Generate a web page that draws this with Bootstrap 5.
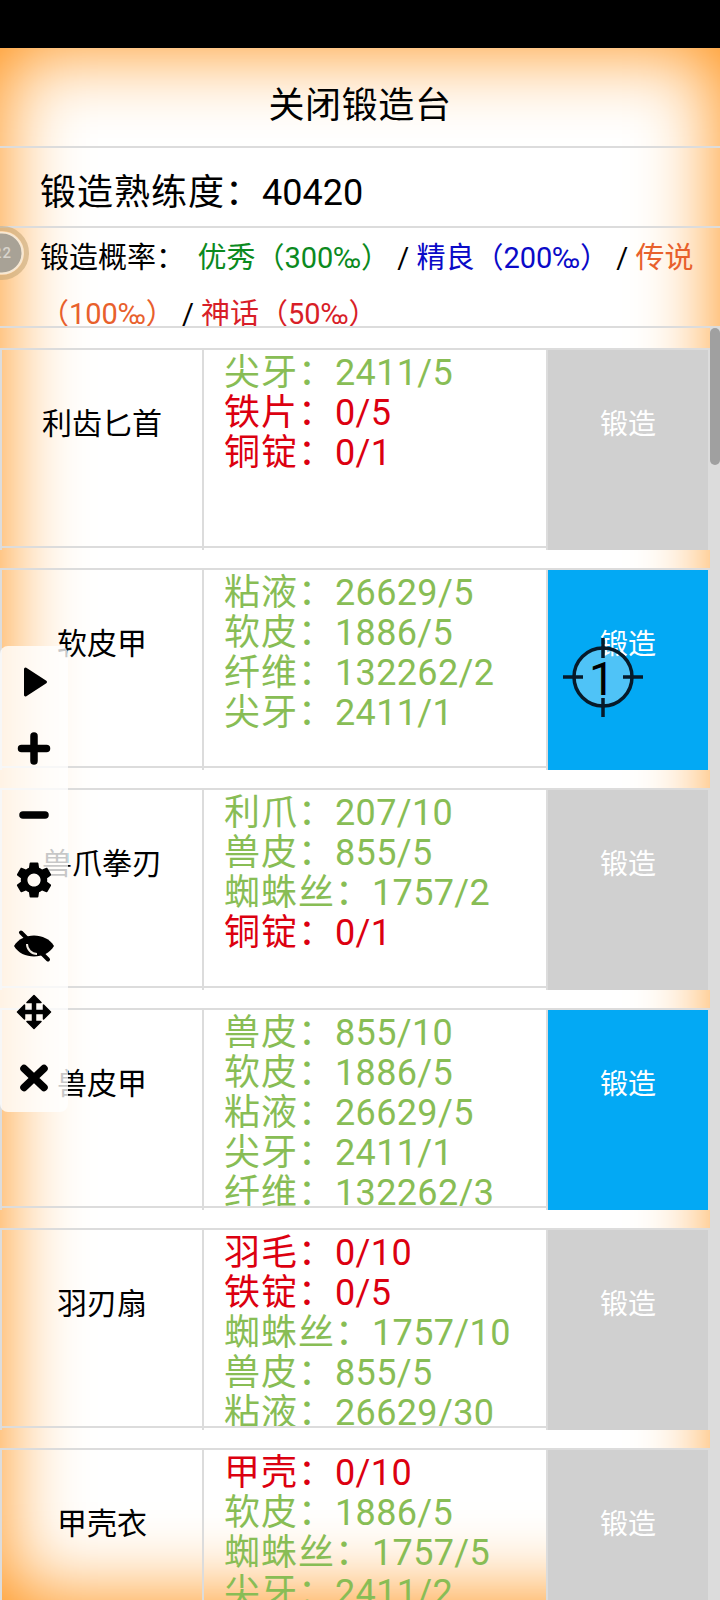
<!DOCTYPE html>
<html lang="zh">
<head>
<meta charset="utf-8">
<title>锻造台</title>
<link rel="stylesheet" href="https://cdn.jsdelivr.net/npm/bootstrap@5.3.0/dist/css/bootstrap.min.css">
<style>
html,body{margin:0;background:#fff;}
body{font-family:Roboto,"Noto Sans CJK SC",sans-serif;color:#000;}
.screen{width:720px;height:1600px;overflow:hidden;position:relative;}
.statusbar{height:48px;background:#000;flex:none;}
.stage{height:1552px;flex:none;box-shadow:inset 0 0 82px #ff8c0a;background:#fff;}
.title-bar{height:100px;flex:none;padding-top:16px;line-height:84px;font-size:36px;letter-spacing:.6px;border-bottom:2px solid #dcdcdc;}
.skill-bar{height:80px;flex:none;padding:12px 0 0 40px;line-height:66px;font-size:36px;border-bottom:2px solid #dcdcdc;}
.rate-bar{height:100px;flex:none;padding:0 20px 0 40px;line-height:56px;font-size:29px;border-bottom:2px solid #dcdcdc;overflow:hidden;}
.rate-bar>div{margin-top:2px;}
.c-good{color:#0b8a1e;margin-left:-2px}.c-fine{color:#0a0ac8}.c-epic{color:#e8602c}.c-myth{color:#d81e28}
.lbl{letter-spacing:1px;}
.forge-list{padding-top:20px;min-width:0;overflow:hidden;}
.forge-row{width:710px;height:202px;margin-bottom:18px;border:solid #dcdcdc;border-width:2px 2px 0 2px;flex:none;}
.name-cell{width:202px;border-right:2px solid #dcdcdc;flex:none;}
.name-in{height:198px;border-bottom:2px solid #dcdcdc;margin-left:-2px;padding:1px 0 0 2px;font-size:30px;line-height:146px;text-align:center;}
.mat-cell{flex:1 1 0;min-width:0;}
.mat-in{height:198px;border-bottom:2px solid #dcdcdc;overflow:hidden;padding:3px 0 0 20px;font-size:36px;line-height:40px;letter-spacing:.35px;white-space:nowrap;}
.ok{color:#88bd55}.no{color:#dc0010}
.forge-btn{width:162px;flex:none;border-left:2px solid #dcdcdc;background:#d0d0d0;color:#fff;font-size:28px;line-height:150px;text-align:center;}
.forge-btn.on{background:#03a9f4;}
.track{width:10px;flex:none;background:#dcdcdc;}
.thumb{height:137px;background:#a0a0a0;border-radius:5px;}
.tool-panel{position:absolute;left:0;top:646px;width:68px;height:466px;padding-top:3px;background:rgba(255,255,255,.78);border-radius:8px;}
.tool-item{height:66px;}
.tool-item svg{display:block;}
.cross{position:absolute;left:563px;top:637px;width:80px;height:80px;}
.cross-num{position:absolute;inset:0;font-size:46px;line-height:84px;text-align:center;padding-right:2px;}
.ball{position:absolute;left:-25px;top:226px;width:54px;height:54px;}
.ball-num{position:absolute;inset:0;padding-left:1px;font-size:15px;font-weight:500;line-height:54px;text-align:center;color:#d8d4cc;letter-spacing:1px;}
</style>
</head>
<body>
<div class="screen d-flex flex-column">
  <div class="statusbar"></div>
  <div class="stage d-flex flex-column">
    <div class="title-bar text-center">关闭锻造台</div>
    <div class="skill-bar"><span class="lbl">锻造熟练度：</span>40420</div>
    <div class="rate-bar"><div>锻造概率：&nbsp;&nbsp;<span class="c-good">优秀（300‰）</span> / <span class="c-fine">精良（200‰）</span> / <span class="c-epic">传说（100‰）</span> / <span class="c-myth">神话（50‰）</span></div></div>
    <div class="d-flex flex-grow-1" style="min-height:0">
      <div class="forge-list flex-grow-1 d-flex flex-column">
        <div class="forge-row d-flex">
          <div class="name-cell"><div class="name-in">利齿匕首</div></div>
          <div class="mat-cell"><div class="mat-in"><div class="ok"><span class="lbl">尖牙：</span>2411/5</div><div class="no"><span class="lbl">铁片：</span>0/5</div><div class="no"><span class="lbl">铜锭：</span>0/1</div></div></div>
          <div class="forge-btn">锻造</div>
        </div>
        <div class="forge-row d-flex">
          <div class="name-cell"><div class="name-in">软皮甲</div></div>
          <div class="mat-cell"><div class="mat-in"><div class="ok"><span class="lbl">粘液：</span>26629/5</div><div class="ok"><span class="lbl">软皮：</span>1886/5</div><div class="ok"><span class="lbl">纤维：</span>132262/2</div><div class="ok"><span class="lbl">尖牙：</span>2411/1</div></div></div>
          <div class="forge-btn on">锻造</div>
        </div>
        <div class="forge-row d-flex">
          <div class="name-cell"><div class="name-in">兽爪拳刃</div></div>
          <div class="mat-cell"><div class="mat-in"><div class="ok"><span class="lbl">利爪：</span>207/10</div><div class="ok"><span class="lbl">兽皮：</span>855/5</div><div class="ok"><span class="lbl">蜘蛛丝：</span>1757/2</div><div class="no"><span class="lbl">铜锭：</span>0/1</div></div></div>
          <div class="forge-btn">锻造</div>
        </div>
        <div class="forge-row d-flex">
          <div class="name-cell"><div class="name-in">兽皮甲</div></div>
          <div class="mat-cell"><div class="mat-in"><div class="ok"><span class="lbl">兽皮：</span>855/10</div><div class="ok"><span class="lbl">软皮：</span>1886/5</div><div class="ok"><span class="lbl">粘液：</span>26629/5</div><div class="ok"><span class="lbl">尖牙：</span>2411/1</div><div class="ok"><span class="lbl">纤维：</span>132262/3</div></div></div>
          <div class="forge-btn on">锻造</div>
        </div>
        <div class="forge-row d-flex">
          <div class="name-cell"><div class="name-in">羽刃扇</div></div>
          <div class="mat-cell"><div class="mat-in"><div class="no"><span class="lbl">羽毛：</span>0/10</div><div class="no"><span class="lbl">铁锭：</span>0/5</div><div class="ok"><span class="lbl">蜘蛛丝：</span>1757/10</div><div class="ok"><span class="lbl">兽皮：</span>855/5</div><div class="ok"><span class="lbl">粘液：</span>26629/30</div></div></div>
          <div class="forge-btn">锻造</div>
        </div>
        <div class="forge-row d-flex">
          <div class="name-cell"><div class="name-in">甲壳衣</div></div>
          <div class="mat-cell"><div class="mat-in"><div class="no"><span class="lbl">甲壳：</span>0/10</div><div class="ok"><span class="lbl">软皮：</span>1886/5</div><div class="ok"><span class="lbl">蜘蛛丝：</span>1757/5</div><div class="ok"><span class="lbl">尖牙：</span>2411/2</div></div></div>
          <div class="forge-btn">锻造</div>
        </div>
      </div>
      <div class="track"><div class="thumb"></div></div>
    </div>
  </div>

  <div class="ball">
    <svg width="54" height="54" viewBox="0 0 54 54"><circle cx="27" cy="27" r="24.5" fill="none" stroke="#c8a878" stroke-opacity=".6" stroke-width="5"/><circle cx="27" cy="27" r="20" fill="#a8a296"/><circle cx="27" cy="27" r="20.5" fill="none" stroke="#f6e8d4" stroke-width="2"/></svg>
    <div class="ball-num">22</div>
  </div>

  <div class="tool-panel d-flex flex-column">
    <div class="tool-item d-flex align-items-center justify-content-center">
      <svg width="48" height="48" viewBox="0 0 48 48"><path d="M15.500 11L35.500 24L15.500 37Z" fill="#000" stroke="#000" stroke-width="3" stroke-linejoin="round"/></svg>
    </div>
    <div class="tool-item d-flex align-items-center justify-content-center">
      <svg width="48" height="48" viewBox="0 0 48 48"><path d="M24 12V37M11.500 24.500H36.500" fill="none" stroke="#000" stroke-width="7.500" stroke-linecap="round"/></svg>
    </div>
    <div class="tool-item d-flex align-items-center justify-content-center">
      <svg width="48" height="48" viewBox="0 0 48 48"><path d="M13 25H35" fill="none" stroke="#000" stroke-width="7.500" stroke-linecap="round"/></svg>
    </div>
    <div class="tool-item d-flex align-items-center justify-content-center">
      <svg width="44" height="44" viewBox="0 0 24 24"><path fill="#000" d="M19.14 12.94c.04-.3.06-.61.06-.94 0-.32-.02-.64-.07-.94l2.03-1.58c.18-.14.23-.41.12-.61l-1.92-3.32c-.12-.22-.37-.29-.59-.22l-2.39.96c-.5-.38-1.03-.7-1.62-.94l-.36-2.54c-.04-.24-.24-.41-.48-.41h-3.84c-.24 0-.43.17-.47.41l-.36 2.54c-.59.24-1.13.57-1.62.94l-2.39-.96c-.22-.08-.47 0-.59.22L2.74 8.87c-.12.21-.08.47.12.61l2.03 1.58c-.05.3-.09.63-.09.94s.02.64.07.94l-2.03 1.58c-.18.14-.23.41-.12.61l1.92 3.32c.12.22.37.29.59.22l2.39-.96c.5.38 1.03.7 1.62.94l.36 2.54c.05.24.24.41.48.41h3.84c.24 0 .44-.17.47-.41l.36-2.54c.59-.24 1.13-.56 1.62-.94l2.39.96c.22.08.47 0 .59-.22l1.92-3.32c.12-.22.07-.47-.12-.61l-2.01-1.58zM12 15.6c-1.98 0-3.6-1.62-3.6-3.6s1.62-3.6 3.6-3.6 3.6 1.62 3.6 3.6-1.62 3.6-3.6 3.6z"/></svg>
    </div>
    <div class="tool-item d-flex align-items-center justify-content-center">
      <svg width="48" height="36" viewBox="-24 -18 48 36"><path d="M-20 0C-12-14 12-14 20 0C12 14-12 14-20 0Z" fill="#000"/><path d="M-7-2A10 10 0 0 0 3 8" fill="none" stroke="#f2ece4" stroke-width="2"/><path d="M-13-13.500L14 13.500" stroke="#000" stroke-width="4" stroke-linecap="round"/></svg>
    </div>
    <div class="tool-item d-flex align-items-center justify-content-center">
      <svg width="40" height="40" viewBox="-20 -20 40 40"><path d="M0-13V13M-13 0H13" stroke="#000" stroke-width="4.500"/><path d="M0-16.500L-7-9.500H7ZM0 16.500L-7 9.500H7ZM-16.500 0L-9.500-7V7ZM16.500 0L9.500-7V7Z" fill="#000" stroke="#000" stroke-width="1.500" stroke-linejoin="round"/></svg>
    </div>
    <div class="tool-item d-flex align-items-center justify-content-center">
      <svg width="48" height="48" viewBox="0 0 48 48"><path d="M14 14.500L34 33.500M34 14.500L14 33.500" fill="none" stroke="#000" stroke-width="7.500" stroke-linecap="round"/></svg>
    </div>
  </div>

  <div class="cross">
    <svg width="80" height="80" viewBox="0 0 80 80"><circle cx="40" cy="40" r="29" fill="#fff" fill-opacity=".3" stroke="#061a2a" stroke-width="3.500"/><path d="M0 40H20M60 40H80M40 1V21M40 61V81" stroke="#061a2a" stroke-width="3.500"/></svg>
    <div class="cross-num">1</div>
  </div>
</div>
<script src="https://cdn.jsdelivr.net/npm/bootstrap@5.3.0/dist/js/bootstrap.bundle.min.js"></script>
</body>
</html>
